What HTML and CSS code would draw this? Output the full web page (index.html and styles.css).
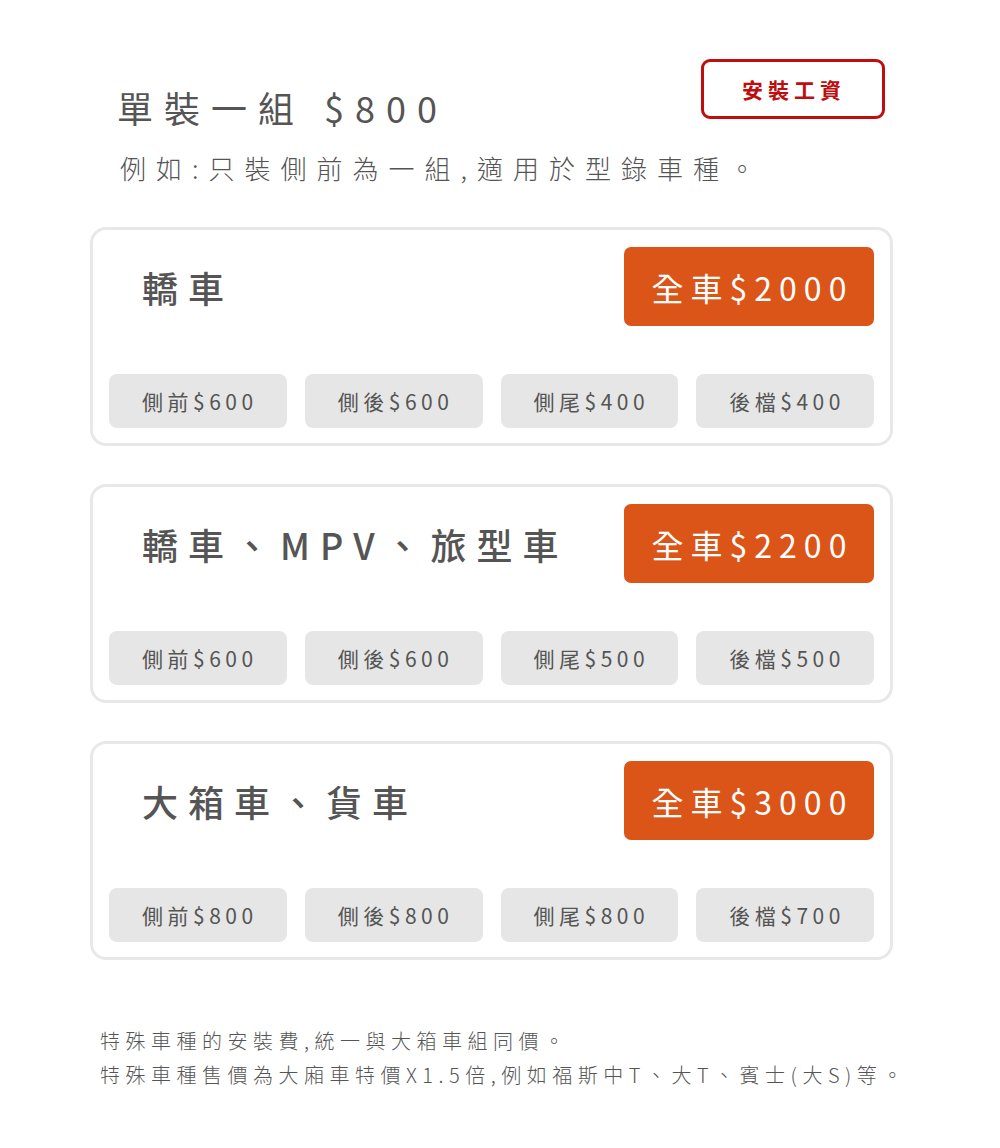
FILE: index.html
```html
<!DOCTYPE html>
<html lang="zh-Hant">
<head>
<meta charset="utf-8">
<link rel="stylesheet" href="styles.css">
</head>
<body>
<div class="page">
  <header class="head">
    <div class="intro">
      <h1 class="title">單裝一組 $800</h1>
      <p class="sub">例如:只裝側前為一組,適用於型錄車種。</p>
    </div>
    <div class="badge">安裝工資</div>
  </header>

  <section class="card">
    <div class="card-top">
      <h2 class="card-title">轎車</h2>
      <div class="full">全車$2000</div>
    </div>
    <div class="chips">
      <div class="chip">側前$600</div>
      <div class="chip">側後$600</div>
      <div class="chip">側尾$400</div>
      <div class="chip">後檔$400</div>
    </div>
  </section>

  <section class="card">
    <div class="card-top">
      <h2 class="card-title">轎車、MPV、旅型車</h2>
      <div class="full">全車$2200</div>
    </div>
    <div class="chips">
      <div class="chip">側前$600</div>
      <div class="chip">側後$600</div>
      <div class="chip">側尾$500</div>
      <div class="chip">後檔$500</div>
    </div>
  </section>

  <section class="card">
    <div class="card-top">
      <h2 class="card-title">大箱車、貨車</h2>
      <div class="full">全車$3000</div>
    </div>
    <div class="chips">
      <div class="chip">側前$800</div>
      <div class="chip">側後$800</div>
      <div class="chip">側尾$800</div>
      <div class="chip">後檔$700</div>
    </div>
  </section>

  <footer class="notes">
    <p>特殊車種的安裝費,統一與大箱車組同價。</p>
    <p>特殊車種售價為大廂車特價X1.5倍,例如福斯中T、大T、賓士(大S)等。</p>
  </footer>
</div>
</body>
</html>
```

FILE: styles.css
```css
* { box-sizing: border-box; }
body {
  margin: 0;
  background: #fff;
  font-family: "Noto Sans CJK TC", "Noto Sans", sans-serif;
  color: #555;
}
.page {
  width: 803px;
  margin-left: 90px;
  padding-top: 59px;
}
.head {
  display: flex;
  justify-content: space-between;
  align-items: flex-start;
  margin-bottom: 40px;
}
.intro {
  flex: 1 1 auto;
  min-width: 0;
  padding-top: 22px;
  padding-left: 27px;
  white-space: nowrap;
}
.title {
  margin: 0;
  font-size: 36px;
  font-weight: 400;
  letter-spacing: 11px;
  line-height: 52px;
  color: #555;
}
.sub {
  margin: 0;
  margin-top: 16px;
  font-size: 26px;
  font-weight: 300;
  letter-spacing: 10px;
  line-height: 38px;
  color: #555;
  padding-left: 3px;
}
.badge {
  flex: none;
  width: 184px;
  height: 60px;
  margin-right: 8px;
  border: 3px solid #c00d0d;
  border-radius: 9px;
  display: flex;
  align-items: center;
  justify-content: center;
  color: #c00d0d;
  font-weight: 700;
  font-size: 21px;
  letter-spacing: 5px;
  padding-left: 2px;
}
.card {
  border: 3px solid #e8e8e8;
  border-radius: 16px;
  padding: 17px 16px 15px 16px;
  margin-bottom: 38px;
}
.card-top {
  display: flex;
  justify-content: space-between;
  align-items: center;
  margin-bottom: 48px;
}
.card-title {
  margin: 0;
  padding-left: 33px;
  font-size: 36px;
  font-weight: 500;
  letter-spacing: 10px;
  color: #555;
}
.full {
  flex: none;
  width: 250px;
  height: 79px;
  background: #dc5518;
  border-radius: 7px;
  color: #fff;
  font-size: 32px;
  font-weight: 400;
  letter-spacing: 7px;
  padding-left: 7px;
  display: flex;
  align-items: center;
  justify-content: center;
}
.chips {
  display: grid;
  grid-template-columns: repeat(4, 1fr);
  gap: 18px;
}
.chip {
  height: 54px;
  background: #e6e6e6;
  border-radius: 8px;
  display: flex;
  align-items: center;
  justify-content: center;
  font-size: 21px;
  font-weight: 400;
  letter-spacing: 4.5px;
  padding-left: 4px;
  color: #555;
}
.notes {
  margin-top: 64px;
  padding-left: 10px;
  white-space: nowrap;
}
.notes p {
  margin: 0;
  font-size: 20px;
  font-weight: 300;
  letter-spacing: 5.5px;
  line-height: 34px;
  color: #555;
}
```
